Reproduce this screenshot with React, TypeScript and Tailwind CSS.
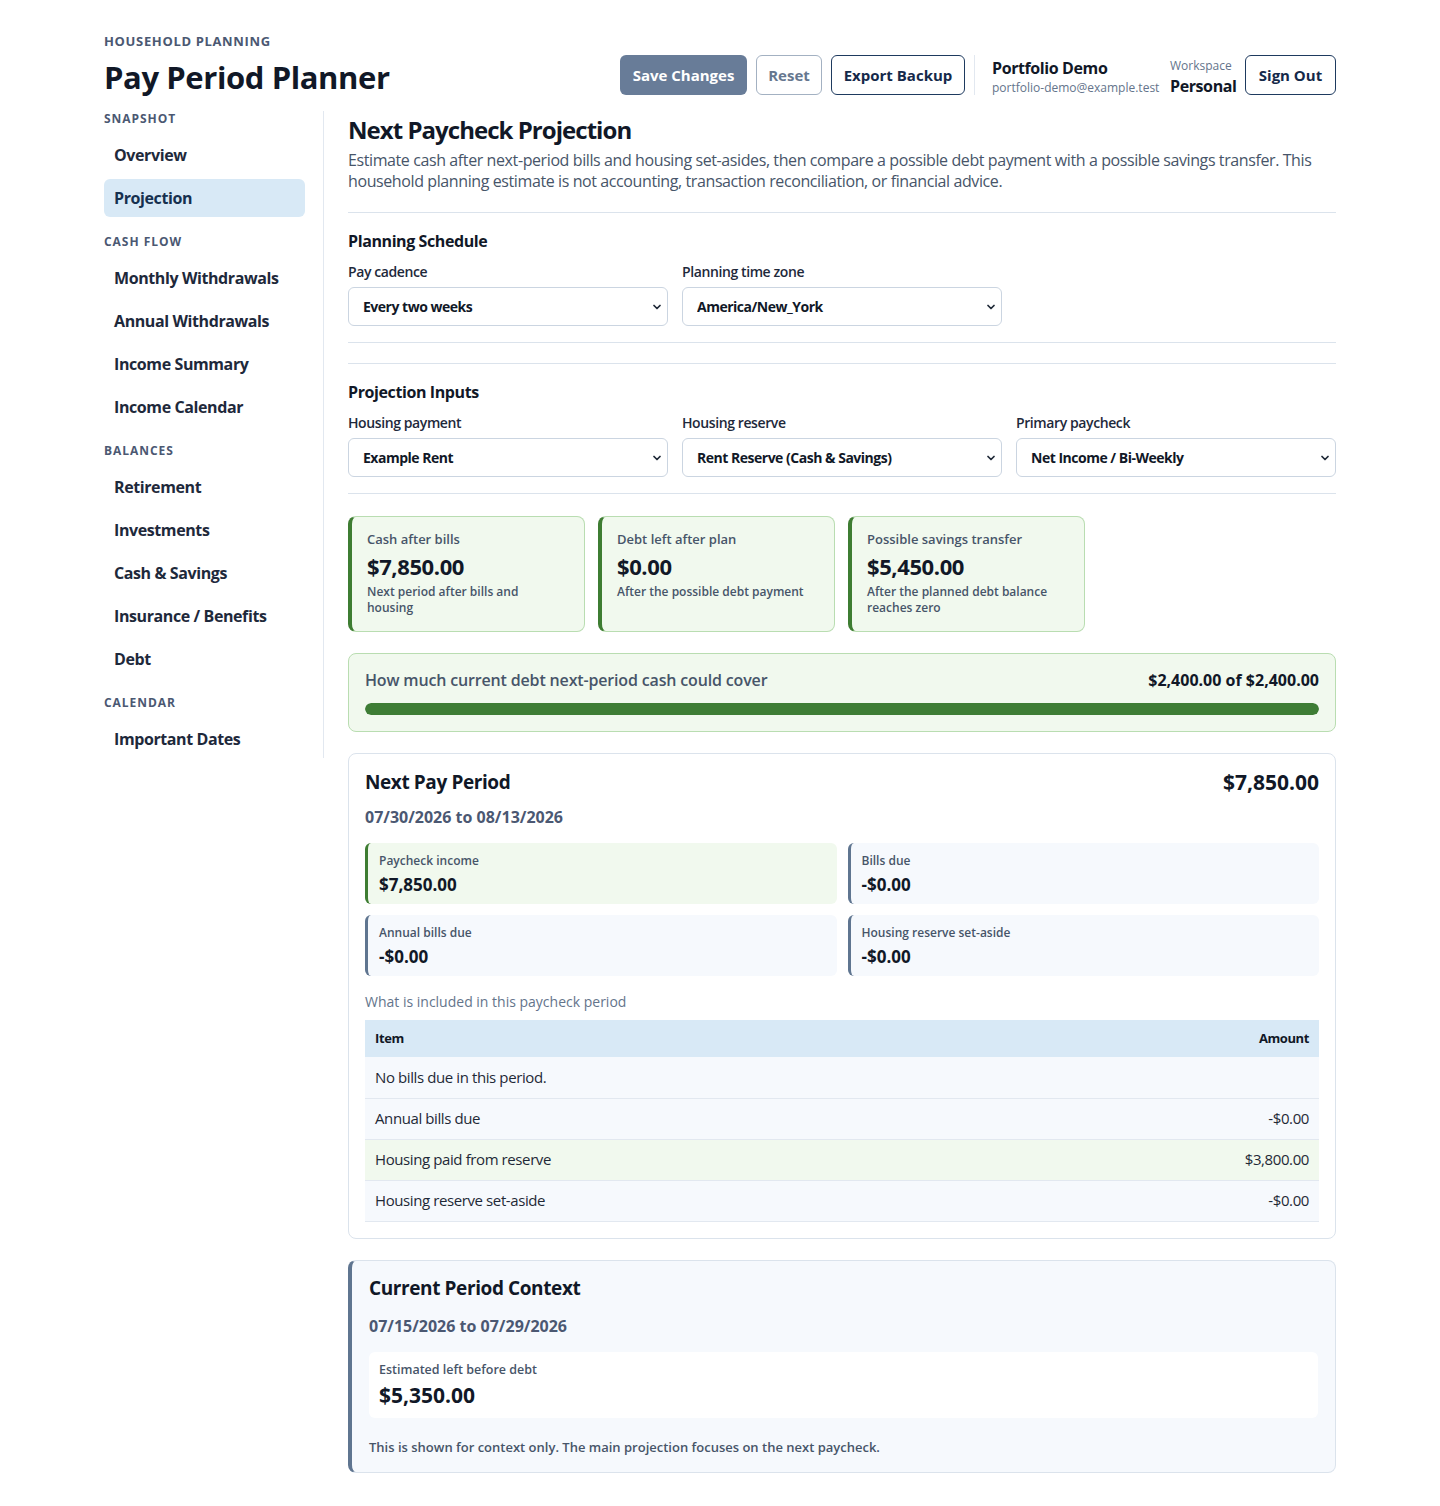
import { ChevronDown } from "lucide-react";

type NavGroup = { label: string; items: string[] };

const navGroups: NavGroup[] = [
  { label: "Snapshot", items: ["Overview", "Projection"] },
  { label: "Cash Flow", items: ["Monthly Withdrawals", "Annual Withdrawals", "Income Summary", "Income Calendar"] },
  { label: "Balances", items: ["Retirement", "Investments", "Cash & Savings", "Insurance / Benefits", "Debt"] },
  { label: "Calendar", items: ["Important Dates"] },
];

const summaryCards = [
  { label: "Cash after bills", value: "$7,850.00", note: "Next period after bills and housing" },
  { label: "Debt left after plan", value: "$0.00", note: "After the possible debt payment" },
  { label: "Possible savings transfer", value: "$5,450.00", note: "After the planned debt balance reaches zero" },
];

const periodStats = [
  { label: "Paycheck income", value: "$7,850.00", positive: true },
  { label: "Bills due", value: "-$0.00" },
  { label: "Annual bills due", value: "-$0.00" },
  { label: "Housing reserve set-aside", value: "-$0.00" },
];

const periodRows = [
  { item: "No bills due in this period.", amount: "" },
  { item: "Annual bills due", amount: "-$0.00" },
  { item: "Housing paid from reserve", amount: "$3,800.00", highlight: true },
  { item: "Housing reserve set-aside", amount: "-$0.00" },
];

function SelectField({ label, value }: { label: string; value: string }) {
  return (
    <label className="flex flex-col gap-[5px]">
      <span className="text-sm leading-5 font-semibold text-[#1e293b]">{label}</span>
      <div className="relative">
        <select
          defaultValue={value}
          className="w-full h-[39px] appearance-none rounded-md border border-[#cbd5e1] bg-white pl-[14px] pr-8 text-sm font-bold tracking-[-0.035em] text-[#111827] outline-none"
        >
          <option>{value}</option>
        </select>
        <ChevronDown
          size={12}
          strokeWidth={3.5}
          className="pointer-events-none absolute right-[5px] top-1/2 -translate-y-1/2 text-[#1f2937]"
        />
      </div>
    </label>
  );
}

export default function App() {
  return (
    <div className="min-h-screen bg-white font-['Open_Sans',sans-serif] tracking-[-0.025em] text-[#111827]">
      <div className="max-w-[1232px] mx-auto pt-[32px] pb-8">
        {/* HEADER */}
        <header className="flex items-start justify-between">
          <div>
            <p className="text-[13px] leading-[18px] font-bold uppercase tracking-[0.05em] text-[#4b5872]">
              Household Planning
            </p>
            <h1 className="mt-[5px] text-[31px] leading-[44px] font-bold text-[#111827]">Pay Period Planner</h1>
          </div>
          <div className="mt-[23px] flex items-start tracking-normal">
            <div className="flex items-center gap-[9px]">
              <button className="w-[127px] h-10 rounded-md bg-[#687c98] text-white text-[15px] font-bold">
                Save Changes
              </button>
              <button className="w-[66px] h-10 rounded-md border border-[#a3b1c2] text-[#66778f] text-[15px] font-bold">
                Reset
              </button>
              <button className="w-[134px] h-10 rounded-md border border-[#1e3a5f] text-[#15294a] text-[15px] font-bold">
                Export Backup
              </button>
            </div>
            <div className="w-px h-10 bg-[#e2e8f0] ml-[9px] mr-[17px]" />
            <div className="w-[166px] mt-[3px] flex flex-col whitespace-nowrap">
              <span className="text-base leading-5 font-bold tracking-[-0.025em] text-[#111827]">Portfolio Demo</span>
              <span className="text-xs leading-5 text-[#64748b]">portfolio-demo@example.test</span>
            </div>
            <div className="w-[63px] mt-[3px] ml-3 flex flex-col">
              <span className="text-xs leading-4 text-[#64748b]">Workspace</span>
              <span className="text-base leading-6 font-bold tracking-[-0.025em] text-[#111827]">Personal</span>
            </div>
            <button className="ml-3 w-[91px] h-10 rounded-md border border-[#1e3a5f] text-[#15294a] text-[15px] font-bold">
              Sign Out
            </button>
          </div>
        </header>

        <div className="flex items-start mt-3">
          {/* SIDEBAR */}
          <nav className="w-[220px] shrink-0 pr-[18px] border-r border-[#e2e8f0] flex flex-col gap-[17px]">
            {navGroups.map((group) => (
              <div key={group.label}>
                <p className="text-xs leading-4 font-bold uppercase tracking-[0.08em] text-[#4b5872] mb-[9px]">
                  {group.label}
                </p>
                <div className="flex flex-col gap-[5px]">
                  {group.items.map((item) => (
                    <a
                      key={item}
                      className={
                        item === "Projection"
                          ? "h-[38px] flex items-center px-2.5 rounded-md bg-[#d8e9f6] text-base font-bold text-[#16304f]"
                          : "h-[38px] flex items-center px-2.5 rounded-md text-base font-bold text-[#1e293b]"
                      }
                    >
                      {item}
                    </a>
                  ))}
                </div>
              </div>
            ))}
          </nav>

          {/* MAIN */}
          <main className="flex-1 pl-6 flex flex-col">
            <section className="border-b border-[#dbe3ec] pb-5">
              <h2 className="mt-[2px] text-2xl leading-[34px] font-bold tracking-[-0.04em] text-[#111827]">
                Next Paycheck Projection
              </h2>
              <p className="mt-[3px] text-base leading-[21px] text-[#475569]">
                Estimate cash after next-period bills and housing set-asides, then compare a possible debt payment with a
                possible savings transfer. This household planning estimate is not accounting, transaction
                reconciliation, or financial advice.
              </p>
            </section>

            <section className="pt-4 pb-4 border-b border-[#dbe3ec]">
              <h3 className="text-base leading-6 font-bold text-[#111827]">Planning Schedule</h3>
              <div className="mt-[9px] grid grid-cols-3 gap-3.5">
                <SelectField label="Pay cadence" value="Every two weeks" />
                <SelectField label="Planning time zone" value="America/New_York" />
              </div>
            </section>

            <section className="mt-5 pt-4 pb-4 border-t border-b border-[#dbe3ec]">
              <h3 className="text-base leading-6 font-bold text-[#111827]">Projection Inputs</h3>
              <div className="mt-[9px] grid grid-cols-3 gap-3.5">
                <SelectField label="Housing payment" value="Example Rent" />
                <SelectField label="Housing reserve" value="Rent Reserve (Cash & Savings)" />
                <SelectField label="Primary paycheck" value="Net Income / Bi-Weekly" />
              </div>
            </section>

            {/* summary cards */}
            <div className="mt-[22px] grid grid-cols-[repeat(3,237px)] gap-[13px]">
              {summaryCards.map((card) => (
                <div
                  key={card.label}
                  className="h-[116px] rounded-lg border border-[#b9ddb1] border-l-4 border-l-[#3e7d32] bg-[#f1f9ee] pl-[15px] pr-4 pt-[13px]"
                >
                  <p className="text-[13px] leading-[18px] font-semibold tracking-normal text-[#475569]">{card.label}</p>
                  <p className="mt-1 text-[22px] leading-7 font-bold text-[#111827]">{card.value}</p>
                  <p className="mt-[4px] max-w-[195px] text-xs leading-4 font-semibold tracking-normal text-[#475569]">
                    {card.note}
                  </p>
                </div>
              ))}
            </div>

            {/* debt coverage */}
            <div className="mt-[21px] rounded-lg border border-[#b9ddb1] bg-[#f1f9ee] px-4 pt-[14px] pb-4">
              <div className="flex items-center justify-between">
                <span className="text-base leading-6 font-semibold tracking-[-0.01em] text-[#475569]">
                  How much current debt next-period cash could cover
                </span>
                <span className="text-base leading-6 font-bold tracking-normal text-[#111827]">$2,400.00 of $2,400.00</span>
              </div>
              <div className="mt-[11px] h-3 rounded-full bg-[#dfe9dc] overflow-hidden">
                <div className="h-full rounded-full bg-[#3e7d35]" style={{ width: `${(2400 / 2400) * 100}%` }} />
              </div>
            </div>

            {/* next pay period */}
            <div className="mt-[21px] rounded-lg border border-[#dbe3ec] bg-white px-4 pt-[14px] pb-4">
              <div className="flex items-center justify-between">
                <h3 className="text-[19px] leading-7 font-bold text-[#111827]">Next Pay Period</h3>
                <span className="text-[21px] leading-7 font-bold tracking-normal text-[#111827]">$7,850.00</span>
              </div>
              <p className="mt-2.5 text-base leading-[22px] font-bold tracking-normal text-[#4b5872]">
                07/30/2026 to 08/13/2026
              </p>

              <div className="mt-[15px] grid grid-cols-2 gap-[11px]">
                {periodStats.map((stat) => (
                  <div
                    key={stat.label}
                    className={
                      stat.positive
                        ? "h-[61px] rounded-md border-l-[3px] border-l-[#3e7d32] bg-[#f1f9ee] pl-[11px] pt-[10px]"
                        : "h-[61px] rounded-md border-l-[3px] border-l-[#5f7590] bg-[#f6f9fd] pl-[11px] pt-[10px]"
                    }
                  >
                    <p className="text-xs leading-4 font-semibold tracking-normal text-[#475569]">{stat.label}</p>
                    <p className="mt-[5px] text-[17px] leading-[22px] font-bold tracking-normal text-[#111827]">
                      {stat.value}
                    </p>
                  </div>
                ))}
              </div>

              <p className="mt-[16px] text-sm leading-5 tracking-normal text-[#64748b]">
                What is included in this paycheck period
              </p>
              <table className="mt-2 w-full border-collapse">
                <thead>
                  <tr className="bg-[#d8e9f6] h-[37px]">
                    <th className="px-2.5 text-left text-[13px] font-bold text-[#111827]">Item</th>
                    <th className="px-2.5 text-right text-[13px] font-bold text-[#111827]">Amount</th>
                  </tr>
                </thead>
                <tbody>
                  {periodRows.map((row) => (
                    <tr
                      key={row.item}
                      className={
                        row.highlight
                          ? "h-[41px] bg-[#f1f9ee] border-b border-[#e2e8f0]"
                          : "h-[41px] bg-[#f6f9fd] border-b border-[#e2e8f0]"
                      }
                    >
                      <td className="px-2.5 text-[15px] text-[#1f2937]">{row.item}</td>
                      <td className="px-2.5 text-right text-[15px] text-[#1f2937]">{row.amount}</td>
                    </tr>
                  ))}
                </tbody>
              </table>
            </div>

            {/* current period */}
            <div className="mt-[21px] rounded-lg border border-[#dbe3ec] border-l-4 border-l-[#5f7590] bg-[#f6f9fd] pl-[17px] pr-[17px] pt-[13px] pb-4">
              <h3 className="text-[19px] leading-7 font-bold text-[#111827]">Current Period Context</h3>
              <p className="mt-[13px] text-base leading-[22px] font-bold tracking-normal text-[#4b5872]">
                07/15/2026 to 07/29/2026
              </p>
              <div className="mt-[15px] h-[66px] rounded-md bg-white px-2.5 pt-[10px]">
                <p className="text-[12.5px] leading-4 font-semibold tracking-normal text-[#475569]">
                  Estimated left before debt
                </p>
                <p className="mt-[4px] text-[21px] leading-[26px] font-bold tracking-normal text-[#111827]">$5,350.00</p>
              </div>
              <p className="mt-5 text-[13px] leading-[18px] font-semibold tracking-normal text-[#475569]">
                This is shown for context only. The main projection focuses on the next paycheck.
              </p>
            </div>
          </main>
        </div>
      </div>
    </div>
  );
}
